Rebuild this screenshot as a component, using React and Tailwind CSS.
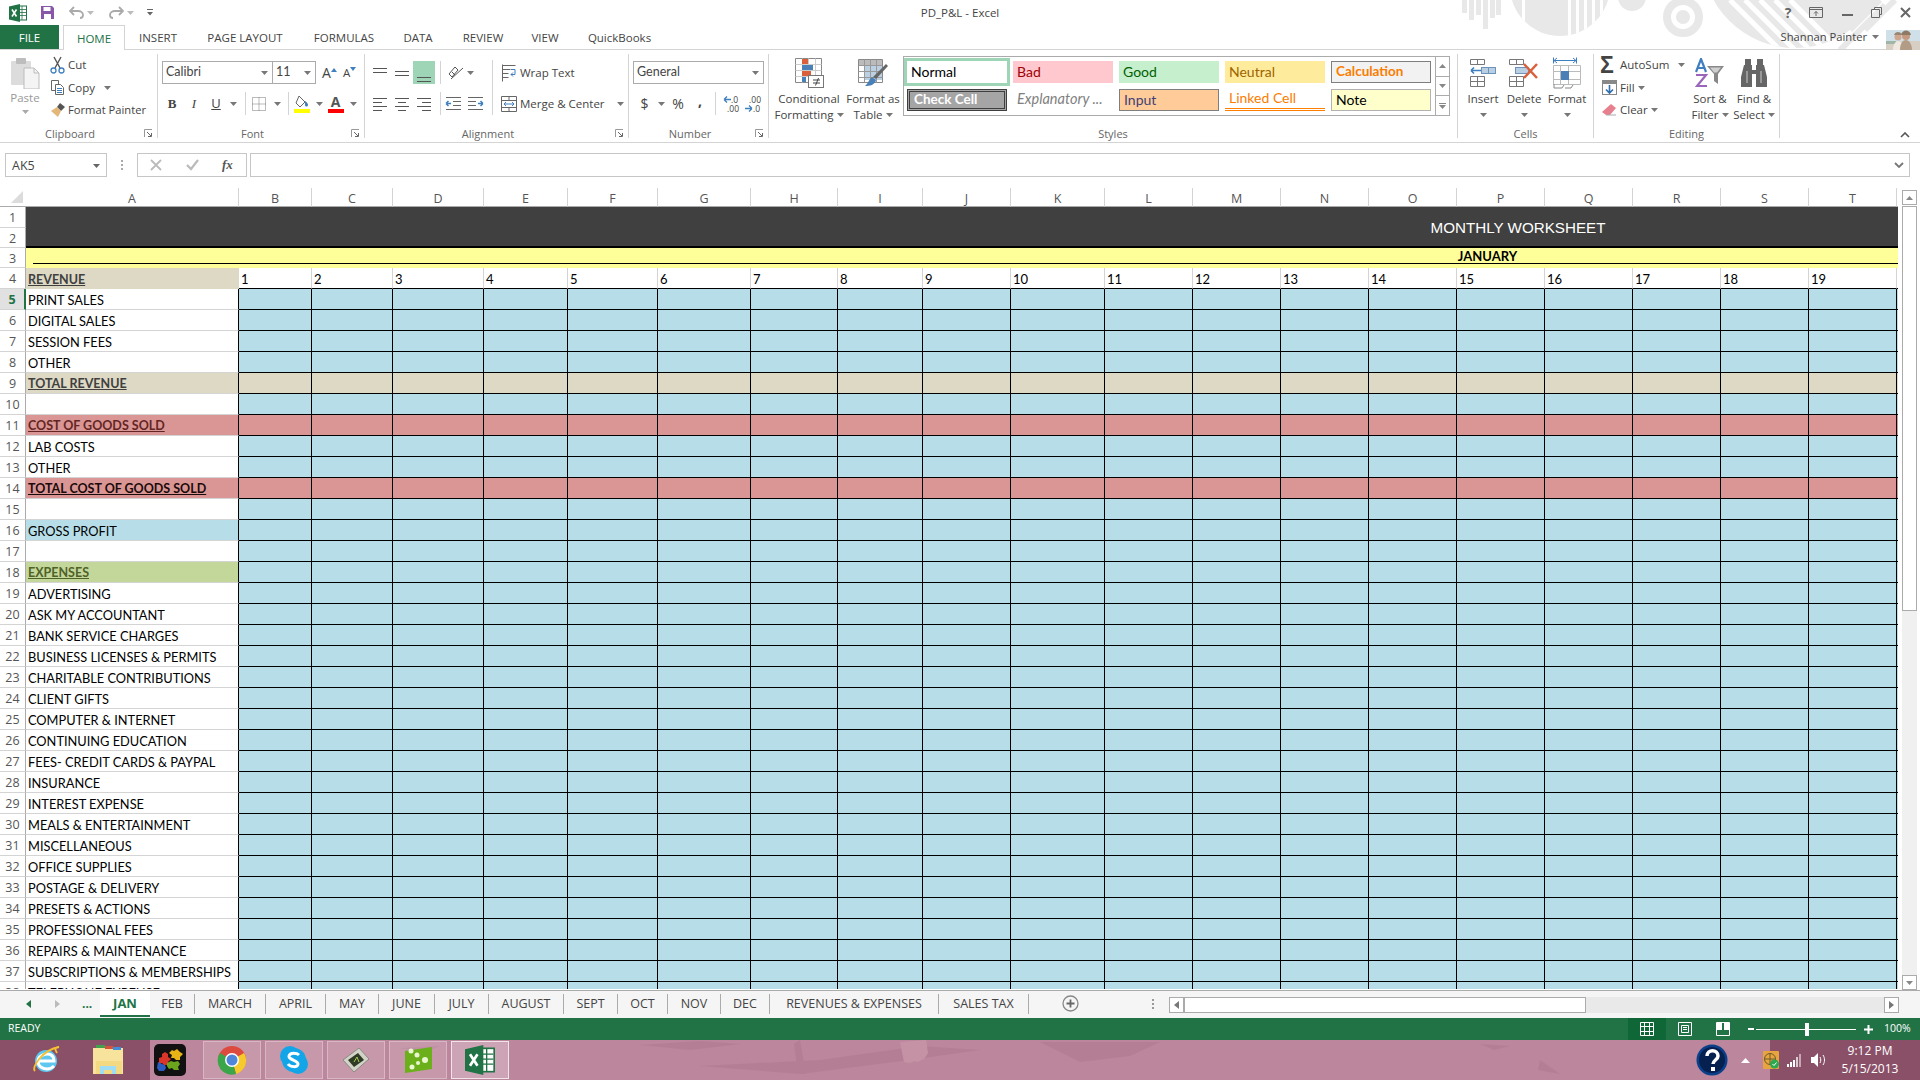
import React from "react";

const Caret = ({ c = "#777" }) => (
  <svg width="7" height="4" viewBox="0 0 7 4" className="shrink-0"><path d="M0 0h7L3.500 4z" fill={c} /></svg>
);

const Launcher = () => (
  <svg width="9" height="9" viewBox="0 0 9 9" className="absolute right-[4px] bottom-[0px]">
    <path d="M.5 8V.5H8" fill="none" stroke="#999" />
    <path d="M3 3l4 4M7.500 4v3.500H4" fill="none" stroke="#666" />
  </svg>
);

const Group = ({ w, label, launcher, children }) => (
  <div className={`relative mt-[4px] flex h-[84px] shrink-0 flex-col border-r border-[#d4d4d4] ${w}`}>
    <div className="flex min-h-0 flex-1">{children}</div>
    <div className={`-mb-[3px] h-[14px] text-center text-[11px] leading-[14px] text-[#666] ${launcher ? "pr-[17px]" : ""}`}>{label}</div>
    {launcher && <Launcher />}
  </div>
);

const BigBtn = ({ w, icon, l1, l2 }) => (
  <div className={`flex shrink-0 flex-col items-center pt-[4px] ${w}`}>
    <div className="flex h-[30px] items-center justify-center">{icon}</div>
    <div className="mt-[3px] whitespace-nowrap text-center leading-[16px]">{l1}</div>
    <div className="flex h-[16px] items-center justify-center gap-[3px] whitespace-nowrap leading-[16px]">{l2}<Caret /></div>
  </div>
);

const Lines = ({ ys, xs }) => (
  <svg width="16" height="16" viewBox="0 0 16 16">
    {ys.map((y, i) => <path key={i} d={`M${xs[i][0]} ${y}.5H${xs[i][1]}`} stroke="#555" />)}
  </svg>
);

const Paste = () => (
  <svg width="30" height="32" viewBox="0 0 30 32">
    <rect x="1" y="4" width="20" height="24" rx="1" fill="#dcdcdc" />
    <rect x="6" y="1" width="10" height="6" rx="1" fill="#bdbdbd" />
    <path d="M14 11h10l5 5v16H14z" fill="#f4f4f4" stroke="#bdbdbd" />
    <path d="M24 11v5h5" fill="none" stroke="#bdbdbd" />
  </svg>
);
const Scissors = () => (
  <svg width="15" height="18" viewBox="0 0 15 18" fill="none">
    <path d="M11 1L5 12M4 1l6 11" stroke="#555" strokeWidth="1.400" />
    <circle cx="3.500" cy="14.500" r="2.500" stroke="#3f7fbf" strokeWidth="1.300" />
    <circle cx="11.500" cy="14.500" r="2.500" stroke="#3f7fbf" strokeWidth="1.300" />
  </svg>
);
const CopyI = () => (
  <svg width="15" height="15" viewBox="0 0 15 15" fill="none" stroke="#666">
    <path d="M1.500.5h7v10h-7z" fill="#fff" />
    <path d="M5.500 4.500h5l3 3v7h-8z" fill="#fff" />
    <path d="M7 8.500h5M7 10.500h5M7 12.500h5" stroke="#3f7fbf" />
  </svg>
);
const Brush = () => (
  <svg width="16" height="16" viewBox="0 0 16 16">
    <path d="M10 1l5 4-4 4-4-4z" fill="#555" />
    <path d="M7 5l4 4-3 6-7-6z" fill="#e3b778" />
  </svg>
);
const BorderI = () => (
  <svg width="14" height="14" viewBox="0 0 14 14" fill="none" stroke="#777" strokeDasharray="1 1">
    <path d="M.5.5h13v13H.5zM7 .5v13M.5 7h13" />
  </svg>
);
const FillI = () => (
  <svg width="17" height="18" viewBox="0 0 17 18">
    <path d="M5 1l6 6-5 5-4-4z" fill="#fff" stroke="#666" />
    <path d="M11 6c2 1 3 3 3 4a1.500 1.500 0 01-3 0z" fill="#3f7fbf" />
    <rect y="14" width="16" height="4" fill="#ffff00" />
  </svg>
);
const FontColor = () => (
  <div className="flex w-[16px] flex-col items-center">
    <span className="text-[14px] font-bold leading-[13px] text-[#555]">A</span>
    <span className="mt-[1px] h-[4px] w-[16px] bg-[#ff0000]" />
  </div>
);
const Orient = () => (
  <svg width="18" height="18" viewBox="0 0 18 18" fill="none" stroke="#555">
    <path d="M2 10l6-7 3 3-6 7z" />
    <path d="M4 15l12-11M5 8l3 3" />
  </svg>
);
const Wrap = () => (
  <svg width="16" height="18" viewBox="0 0 16 18" fill="none">
    <path d="M1.500 1.500h13M1.500 5.500h8M1.500 9.500h6M1.500 13.500h6M1.500 .5v17" stroke="#666" />
    <path d="M10 5.500h4v5h-4M12 8.500l-2 2 2 2" stroke="#3f7fbf" />
  </svg>
);
const Merge = () => (
  <svg width="16" height="18" viewBox="0 0 16 18" fill="none">
    <path d="M.5 1.500h15v15H.5zM.5 5.500h15M.5 12.500h15M8 1.500v4M8 12.500v4" stroke="#666" />
    <path d="M3 9h10M3 9l2-2M3 9l2 2M13 9l-2-2M13 9l-2 2" stroke="#3f7fbf" />
  </svg>
);
const Indent = ({ flip }) => (
  <svg width="16" height="14" viewBox="0 0 16 14" fill="none" className={flip ? "-scale-x-100" : ""}>
    <path d="M1 .5h15M8 4.500h8M8 8.500h8M1 12.500h15" stroke="#666" />
    <path d="M6 6.500H1M1 6.500l2.500-2.500M1 6.500L3.500 9" stroke="#3f7fbf" strokeWidth="1.500" />
  </svg>
);
const CondFmt = () => (
  <svg width="31" height="30" viewBox="0 0 31 30">
    <path d="M1.500 .5h26v24h-26z" fill="#fff" stroke="#888" />
    <path d="M8.500 .5v24M14.500 .5v24M21.500 .5v24M1.500 6.500h26M1.500 12.500h26M1.500 18.500h26" stroke="#ccc" />
    <rect x="8" y="1" width="6" height="5" fill="#d9603b" />
    <rect x="8" y="7" width="11" height="5" fill="#4a80b8" />
    <rect x="8" y="13" width="9" height="5" fill="#d9603b" />
    <rect x="8" y="19" width="4" height="5" fill="#4a80b8" />
    <rect x="14.500" y="17.500" width="15" height="12" fill="#fff" stroke="#777" />
    <path d="M19 22h7M19 25h7M24.500 20l-3 7.500" stroke="#444" fill="none" />
  </svg>
);
const FmtTable = () => (
  <svg width="30" height="30" viewBox="0 0 30 30">
    <path d="M.5 1.500h24v23H.5z" fill="#fff" stroke="#888" />
    <rect x="1" y="2" width="23" height="5" fill="#bbb" />
    <rect x="6" y="7" width="18" height="15" fill="#bcd0e4" />
    <path d="M6.500 1.500v23M12.500 1.500v23M18.500 1.500v23M.5 7.500h24M.5 13.500h24M.5 19.500h24" stroke="#999" />
    <path d="M28 6l2 2-12 13-3-2z" fill="#666" />
    <path d="M14 19l4 3c-1 5-6 6-11 6 3-2 4-7 7-9z" fill="#4a80b8" />
  </svg>
);
const InsertI = () => (
  <svg width="28" height="30" viewBox="0 0 28 30" fill="none">
    <path d="M1.500 1.500h14v5h-14zM8.500 1.500v5M1.500 18.500h14v10h-14zM8.500 18.500v10M1.500 23.500h14" stroke="#777" />
    <path d="M12 12.500H2M2 12.500l3-3M2 12.500l3 3" stroke="#3f7fbf" strokeWidth="1.600" />
    <rect x="12.500" y="9.500" width="14" height="6" fill="#b9cfe4" stroke="#6f93b8" />
    <path d="M19.500 9.500v6" stroke="#6f93b8" />
  </svg>
);
const DeleteI = () => (
  <svg width="30" height="30" viewBox="0 0 30 30" fill="none">
    <path d="M.5 1.500h14v5H.5zM7.500 1.500v5M.5 18.500h14v10H.5zM7.500 18.500v10M.5 23.500h14" stroke="#777" />
    <rect x="6.500" y="9.500" width="13" height="6" fill="#b9cfe4" stroke="#6f93b8" />
    <path d="M15 6l13 14M28 6L15 20" stroke="#d9603b" strokeWidth="2.500" />
  </svg>
);
const FormatI = () => (
  <svg width="29" height="32" viewBox="0 0 29 32" fill="none">
    <path d="M1 3.500h22M1 3.500l3-2.500M1 3.500L4 6M23 3.500L20 1M23 3.500L20 6" stroke="#3f7fbf" />
    <path d="M.5 .5v6M23.500 .5v6" stroke="#3f7fbf" />
    <path d="M.5 8.500h27v19H.5zM7.500 8.500v19M15.500 8.500v19M.5 14.500h27M.5 22.500h27" stroke="#bbb" fill="#fff" />
    <rect x="8" y="14" width="8" height="9" fill="#4a80b8" />
    <path d="M1 27v4h8l2-3M12 31h6l2-3" stroke="#888" />
  </svg>
);
const FillDown = () => (
  <svg width="15" height="15" viewBox="0 0 15 15">
    <rect x=".5" y=".5" width="14" height="14" fill="#fff" stroke="#888" />
    <rect x="1" y="1" width="13" height="3" fill="#888" />
    <path d="M7.500 5v8M4 9.500l3.500 3.500L11 9.500" fill="none" stroke="#2f6fb0" strokeWidth="1.600" />
  </svg>
);
const Eraser = () => (
  <svg width="14" height="12" viewBox="0 0 14 12">
    <path d="M9 0l5 4-6 7H4L0 8z" fill="#e7808e" />
    <path d="M4 11h10" stroke="#aaa" />
  </svg>
);
const SortI = () => (
  <svg width="30" height="30" viewBox="0 0 30 30">
    <path d="M1 14L6 1l5 13M3 10h6" fill="none" stroke="#3f7fbf" strokeWidth="2.200" />
    <path d="M1 17h10L2 28h10" fill="none" stroke="#9966bb" strokeWidth="2.200" />
    <path d="M12 8h17l-6 8v10l-4-3v-7z" fill="#888" />
    <path d="M15 9.500h11l-4 5h-3z" fill="#cfcfcf" />
  </svg>
);
const Binoc = () => (
  <svg width="26" height="28" viewBox="0 0 26 28" fill="#666">
    <rect x="4" y="0" width="6" height="7" />
    <rect x="16" y="0" width="6" height="7" />
    <path d="M3 6h8v5h4V6h8l3 12v10H15V15h-4v13H0V18z" />
    <path d="M5 12h2v12H5zM19 12h2v12h-2z" fill="#999" />
  </svg>
);

const StyleCell = ({ c, children }) => (
  <div className={`flex h-[22px] w-[100px] items-center overflow-hidden whitespace-nowrap pb-[2px] pl-[4px] font-['Lato',sans-serif] ${c}`}>{children}</div>
);

const ScrollBtn = ({ dir }) => (
  <svg width="7" height="4" viewBox="0 0 7 4">
    <path d={dir === "up" ? "M3.500 0L7 4H0z" : "M0 0h7L3.500 4z"} fill="#888" />
  </svg>
);

const Arrow = ({ flip }) => (
  <svg width="8" height="7" viewBox="0 0 8 7" fill="none" className={flip ? "-scale-x-100" : ""}>
    <path d="M8 3.500H1M1 3.500l3-3M1 3.500l3 3" stroke="#3f7fbf" strokeWidth="1.300" />
  </svg>
);

const Ribbon = () => (
  <div className="flex h-[93px] border-b border-[#d4d4d4] bg-white text-[11.5px] text-[#444]">
    <Group w="w-[158px]" label="Clipboard" launcher>
      <div className="flex w-[50px] shrink-0 flex-col items-center pt-[3px] text-[#999]">
        <Paste />
        <span className="mt-[2px] leading-[14px]">Paste</span>
        <div className="mt-[5px]"><Caret c="#aaa" /></div>
      </div>
      <div className="flex flex-col">
        <div className="flex h-[22px] items-center gap-[3px]"><Scissors /><span>Cut</span></div>
        <div className="flex h-[23px] items-center gap-[3px]"><CopyI /><span>Copy</span><span className="ml-[6px]"><Caret /></span></div>
        <div className="flex h-[22px] items-center gap-[2px]"><Brush /><span className="whitespace-nowrap text-[11.2px]">Format Painter</span></div>
      </div>
    </Group>

    <Group w="w-[207px]" label="Font" launcher>
      <div className="flex flex-col pt-[7px]">
        <div className="ml-[4px] flex h-[23px] items-center">
          <div className="flex h-full w-[111px] items-center justify-between border border-[#ababab] pl-[3px] pr-[4px] font-['Lato',sans-serif] text-[12.5px]"><span>Calibri</span><Caret /></div>
          <div className="-ml-px flex h-full w-[44px] items-center justify-between border border-[#ababab] pl-[3px] pr-[4px] font-['Lato',sans-serif] text-[12.5px]"><span>11</span><Caret /></div>
          <div className="ml-[6px] flex w-[16px] items-end text-[14px] leading-none">A<svg width="6" height="4" className="mb-[8px]" viewBox="0 0 6 4"><path d="M3 0l3 4H0z" fill="#3f7fbf" /></svg></div>
          <div className="ml-[5px] flex w-[16px] items-end text-[11.5px] leading-none">A<svg width="6" height="4" className="mb-[7px]" viewBox="0 0 6 4"><path d="M0 0h6L3 4z" fill="#3f7fbf" /></svg></div>
        </div>
        <div className="mt-[8px] flex h-[23px] items-center pl-[3px]">
          <span className="w-[22px] text-center font-['Liberation_Serif',serif] text-[13px] font-bold">B</span>
          <span className="w-[22px] text-center font-['Liberation_Serif',serif] text-[13px] italic">I</span>
          <span className="w-[22px] text-center text-[13px] underline">U</span>
          <span className="flex w-[12px] justify-center"><Caret /></span>
          <span className="ml-[6px] h-[23px] w-px bg-[#d4d4d4]" />
          <span className="flex w-[26px] justify-center"><BorderI /></span>
          <span className="flex w-[10px] justify-center"><Caret /></span>
          <span className="ml-[6px] h-[23px] w-px bg-[#d4d4d4]" />
          <span className="flex w-[27px] justify-center"><FillI /></span>
          <span className="flex w-[6px] justify-center"><Caret /></span>
          <span className="flex w-[27px] justify-center"><FontColor /></span>
          <span className="flex w-[8px] justify-center"><Caret /></span>
        </div>
      </div>
    </Group>

    <Group w="w-[264px]" label="Alignment" launcher>
      <div className="flex flex-col pt-[7px] pl-[4px]">
        <div className="flex h-[23px] items-center">
          <span className="flex w-[22px] justify-center"><Lines ys={[3, 7]} xs={[[1, 15], [1, 15]]} /></span>
          <span className="flex w-[22px] justify-center"><Lines ys={[6, 10]} xs={[[1, 15], [1, 15]]} /></span>
          <span className="flex h-[23px] w-[22px] items-end justify-center bg-[#9fd5b7]"><Lines ys={[9, 13]} xs={[[1, 15], [1, 15]]} /></span>
          <span className="ml-[5px] h-[23px] w-px bg-[#d4d4d4]" />
          <span className="ml-[6px] flex w-[18px] justify-center"><Orient /></span>
          <span className="ml-[2px]"><Caret /></span>
        </div>
        <div className="mt-[8px] flex h-[23px] items-center">
          <span className="flex w-[22px] justify-center"><Lines ys={[2, 6, 10, 14]} xs={[[1, 15], [1, 10], [1, 15], [1, 10]]} /></span>
          <span className="flex w-[22px] justify-center"><Lines ys={[2, 6, 10, 14]} xs={[[1, 15], [4, 12], [1, 15], [4, 12]]} /></span>
          <span className="flex w-[22px] justify-center"><Lines ys={[2, 6, 10, 14]} xs={[[1, 15], [6, 15], [1, 15], [6, 15]]} /></span>
          <span className="ml-[5px] h-[23px] w-px bg-[#d4d4d4]" />
          <span className="flex w-[24px] justify-center"><Indent /></span>
          <span className="flex w-[22px] justify-center"><Indent flip /></span>
        </div>
      </div>
      <div className="ml-[5px] mt-[6px] h-[55px] w-px bg-[#d4d4d4]" />
      <div className="flex flex-col pl-[8px] pt-[7px]">
        <div className="flex h-[23px] items-center gap-[3px]"><Wrap /><span className="whitespace-nowrap">Wrap Text</span></div>
        <div className="mt-[8px] flex h-[23px] items-center gap-[3px]"><Merge /><span className="whitespace-nowrap">Merge &amp; Center</span><span className="ml-[9px]"><Caret /></span></div>
      </div>
    </Group>

    <Group w="w-[140px]" label="Number" launcher>
      <div className="flex flex-col pl-[4px] pt-[7px]">
        <div className="flex h-[23px] w-[131px] items-center justify-between border border-[#ababab] pl-[3px] pr-[4px] font-['Lato',sans-serif] text-[12.5px]"><span>General</span><Caret /></div>
        <div className="mt-[8px] flex h-[23px] items-center">
          <span className="w-[23px] text-center text-[14px]">$</span>
          <span className="flex w-[10px] justify-center"><Caret /></span>
          <span className="w-[24px] text-center text-[14px]">%</span>
          <span className="-mt-[6px] ml-[3px] w-[14px] text-center text-[14px] font-bold">,</span>
          <span className="ml-[8px] h-[23px] w-px bg-[#d4d4d4]" />
          <div className="ml-[7px] flex w-[16px] flex-col text-[8.5px] leading-[9px]">
            <span className="flex items-center"><Arrow /><span>.0</span></span>
            <span className="text-right">.00</span>
          </div>
          <div className="ml-[6px] flex w-[16px] flex-col text-[8.5px] leading-[9px]">
            <span className="text-right">.00</span>
            <span className="flex items-center"><Arrow flip /><span>.0</span></span>
          </div>
        </div>
      </div>
    </Group>

    <Group w="w-[689px]" label="Styles">
      <BigBtn w="ml-[2px] w-[76px]" icon={<CondFmt />} l1="Conditional" l2="Formatting" />
      <BigBtn w="w-[52px]" icon={<FmtTable />} l1="Format as" l2="Table" />
      <div className="ml-[4px] mt-[2px] flex h-[60px] w-[547px] shrink-0 border border-[#ababab]">
        <div className="grid flex-1 grid-cols-[100px_100px_100px_100px_100px] content-start gap-x-[6px] gap-y-[6px] pl-[3px] pt-[4px]">
          <StyleCell c="bg-white text-[14px] text-black outline outline-[3px] outline-[#9fd5b7]">Normal</StyleCell>
          <StyleCell c="bg-[#ffc7ce] text-[14px] text-[#9c0006]">Bad</StyleCell>
          <StyleCell c="bg-[#c6efce] text-[14px] text-[#006100]">Good</StyleCell>
          <StyleCell c="bg-[#ffeb9c] text-[14px] text-[#9c6500]">Neutral</StyleCell>
          <StyleCell c="border border-[#7f7f7f] bg-[#f2f2f2] text-[13.5px] font-bold text-[#fa7d00]">Calculation</StyleCell>
          <StyleCell c="border-[3px] border-double border-[#3f3f3f] bg-[#a5a5a5] text-[13.5px] font-bold text-white">Check Cell</StyleCell>
          <StyleCell c="text-[14.5px] italic text-[#7f7f7f]">Explanatory ...</StyleCell>
          <StyleCell c="border border-[#7f7f7f] bg-[#ffcc99] text-[14px] text-[#3f3f76]">Input</StyleCell>
          <StyleCell c="border-b-[3px] border-double border-[#ff8001] text-[14px] text-[#fa7d00]">Linked Cell</StyleCell>
          <StyleCell c="border border-[#b2b2b2] bg-[#ffffcc] text-[14px] text-black">Note</StyleCell>
        </div>
        <div className="flex w-[14px] flex-col border-l border-[#ababab]">
          <div className="flex flex-1 items-center justify-center border-b border-[#ababab]"><ScrollBtn dir="up" /></div>
          <div className="flex flex-1 items-center justify-center border-b border-[#ababab]"><ScrollBtn /></div>
          <div className="flex flex-1 flex-col items-center justify-center gap-[1px]"><span className="h-px w-[7px] bg-[#888]" /><ScrollBtn /></div>
        </div>
      </div>
    </Group>

    <Group w="w-[136px]" label="Cells">
      <BigBtn w="ml-[5px] w-[40px]" icon={<InsertI />} l1="Insert" />
      <BigBtn w="ml-[1px] w-[40px]" icon={<DeleteI />} l1="Delete" />
      <BigBtn w="ml-[1px] w-[44px]" icon={<FormatI />} l1="Format" />
    </Group>

    <Group w="w-[186px]" label="Editing">
      <div className="flex w-[94px] shrink-0 flex-col pl-[6px]">
        <div className="flex h-[22px] items-center"><span className="w-[20px] font-['Liberation_Sans',sans-serif] text-[23px] font-bold leading-none text-[#444]">Σ</span><span>AutoSum</span><span className="ml-[9px]"><Caret /></span></div>
        <div className="flex h-[23px] items-center"><span className="ml-[2px] w-[18px]"><FillDown /></span><span>Fill</span><span className="ml-[3px]"><Caret /></span></div>
        <div className="flex h-[22px] items-center"><span className="ml-[2px] w-[18px]"><Eraser /></span><span>Clear</span><span className="ml-[3px]"><Caret /></span></div>
      </div>
      <BigBtn w="w-[44px]" icon={<SortI />} l1="Sort &" l2="Filter" />
      <BigBtn w="w-[44px]" icon={<Binoc />} l1="Find &" l2="Select" />
    </Group>

    <div className="flex flex-1 items-end justify-end pb-[4px] pr-[10px]">
      <svg width="10" height="6" viewBox="0 0 10 6"><path d="M1 5l4-4 4 4" fill="none" stroke="#555" strokeWidth="1.600" /></svg>
    </div>
  </div>
);

const Decor = () => (
  <svg width="480" height="50" viewBox="0 0 480 50" className="pointer-events-none absolute right-0 top-0" fill="#e8e8e8">
    <defs>
      <clipPath id="half"><circle cx="120" cy="-14" r="50" /></clipPath>
      <clipPath id="big"><circle cx="355" cy="-45" r="93" /></clipPath>
    </defs>
    {[[22, 13], [29, 20], [36, 15], [43, 29], [50, 18], [56, 15]].map(([x, h]) => <rect key={x} x={x} width="5" height={h} />)}
    <g clipPath="url(#half)">
      <rect x="70" y="-14" width="100" height="60" />
      {[82, 128, 136, 144, 152, 160].map((x) => <rect key={x} x={x} width="3" height="50" fill="#fff" />)}
    </g>
    <circle cx="192" cy="-3" r="14" />
    <circle cx="243" cy="17" r="16" fill="none" stroke="#e8e8e8" strokeWidth="8" />
    <circle cx="243" cy="17" r="7" />
    <g clipPath="url(#big)">
      <rect x="250" y="-10" width="220" height="70" />
      <path d="M290 0l50 50M305 0l50 50M320 0l48 48M335 0l50 50M350 0l50 50" stroke="#fff" strokeWidth="5" fill="none" />
    </g>
    <path d="M410 30L440 0M425 30L455 0M400 50L445 5" stroke="#e8e8e8" strokeWidth="6" />
  </svg>
);

const ExcelLogo = ({ s = 18 }) => (
  <svg width={s} height={s} viewBox="0 0 18 18">
    <rect x="9" y="2" width="8.500" height="14" fill="#fff" stroke="#217346" />
    <path d="M9 5.500h8M9 8.500h8M9 11.500h8M13 2v14" stroke="#217346" strokeWidth=".8" />
    <path d="M0 2.500L11 0v18L0 15.500z" fill="#217346" />
    <path d="M3 5.500l4.500 7M7.500 5.500l-4.500 7" stroke="#fff" strokeWidth="1.600" />
  </svg>
);

const TitleBar = () => (
  <div className="grid h-[25px] grid-cols-[1fr_auto_1fr] items-center">
    <div className="flex items-center pl-[9px]">
      <ExcelLogo />
      <svg width="15" height="15" viewBox="0 0 15 15" className="ml-[13px]">
        <path d="M1 1h11l2 2v11H1z" fill="#8857a8" />
        <rect x="3.500" y="2" width="7" height="4" fill="#fff" />
        <rect x="4" y="9" width="7" height="5" fill="#fff" />
      </svg>
      <svg width="15" height="13" viewBox="0 0 15 13" className="ml-[14px]" fill="none">
        <path d="M5 1L1 5l4 4" stroke="#aaa" strokeWidth="1.800" />
        <path d="M1 5h8c3 0 5 2 5 4s-1 3-3 3" stroke="#aaa" strokeWidth="1.800" />
      </svg>
      <span className="ml-[3px]"><Caret c="#bbb" /></span>
      <svg width="15" height="13" viewBox="0 0 15 13" className="ml-[15px]" fill="none">
        <path d="M10 1l4 4-4 4" stroke="#aaa" strokeWidth="1.800" />
        <path d="M14 5H6c-3 0-5 2-5 4s1 3 3 3" stroke="#aaa" strokeWidth="1.800" />
      </svg>
      <span className="ml-[3px]"><Caret c="#bbb" /></span>
      <svg width="7" height="7" viewBox="0 0 7 7" className="ml-[13px]"><path d="M0 0h6v1H0zM0 3h6L3 6.500z" fill="#666" /></svg>
    </div>
    <div className="text-[11.5px] text-[#444]">PD_P&amp;L - Excel</div>
    <div className="relative flex items-center justify-end pr-[9px] text-[#666]">
      <span className="w-[14px] text-center text-[14px] font-bold leading-none">?</span>
      <svg width="14" height="11" viewBox="0 0 14 11" className="ml-[14px]" fill="none" stroke="#666"><path d="M.5.5h13v10H.5zM.5 2.500h13M7 9V4.500M5 6.500l2-2 2 2" /></svg>
      <svg width="11" height="2" viewBox="0 0 11 2" className="ml-[19px] mt-[4px]"><rect width="11" height="2" fill="#666" /></svg>
      <svg width="11" height="11" viewBox="0 0 11 11" className="ml-[18px]" fill="none" stroke="#666"><path d="M3.500 2.500v-2h7v7h-2M.5 2.500h8v8h-8z" /></svg>
      <svg width="11" height="11" viewBox="0 0 11 11" className="ml-[18px]"><path d="M1 1l9 9M10 1l-9 9" stroke="#666" strokeWidth="2" /></svg>
    </div>
  </div>
);

const Avatar = () => (
  <svg width="34" height="20" viewBox="0 0 34 20" className="absolute right-0 top-[5px]">
    <rect width="34" height="11" fill="#cfe0e8" />
    <rect y="11" width="34" height="9" fill="#d8cfc4" />
    <path d="M0 11h10v3H0z" fill="#9fb6a8" />
    <circle cx="12" cy="7" r="3.500" fill="#d0a78e" />
    <path d="M8 5c1-4 7-4 8 0z" fill="#9a8672" />
    <circle cx="20" cy="6" r="4" fill="#c79a80" />
    <path d="M15 5c1-6 9-6 10 0z" fill="#8f7a66" />
    <path d="M7 20c0-6 3-9 5-9s6 3 6 9z" fill="#efe9e2" />
    <path d="M14 20c0-7 3-10 6-10s6 4 6 10z" fill="#b39c86" />
  </svg>
);

const tabs = [
  ["INSERT", "w-[66px]"], ["PAGE LAYOUT", "w-[108px]"], ["FORMULAS", "w-[90px]"], ["DATA", "w-[58px]"],
  ["REVIEW", "w-[72px]"], ["VIEW", "w-[52px]"], ["QuickBooks", "w-[97px]"],
];

const TabsRow = () => (
  <div className="relative flex h-[25px] items-stretch border-b border-[#d4d4d4] text-[11.5px] text-[#444]">
    <div className="flex w-[59px] items-center justify-center bg-[#217346] pt-px text-white">FILE</div>
    <div className="z-10 ml-[4px] flex h-[25px] w-[62px] items-center justify-center border border-b-0 border-[#d4d4d4] bg-white pt-px text-[#217346]">HOME</div>
    {tabs.map(([t, w]) => <div key={t} className={`flex items-center justify-center pt-px ${w}`}>{t}</div>)}
    <div className="ml-auto flex items-center pr-[41px]">
      <span className="text-[11.2px]">Shannan Painter</span>
      <span className="ml-[5px]"><Caret /></span>
    </div>
    <Avatar />
  </div>
);

const FormulaBar = () => (
  <div className="mt-[10px] flex h-[25px] pl-[5px] pr-[10px]">
    <div className="flex w-[102px] items-center justify-between border border-[#c6c6c6] pl-[6px] pr-[6px] pt-[2px] text-[12.5px] text-[#444]">
      <span>AK5</span><Caret c="#666" />
    </div>
    <div className="flex w-[30px] items-center justify-center"><span className="flex flex-col gap-[2px]"><i className="block h-[2px] w-[2px] bg-[#aaa]" /><i className="block h-[2px] w-[2px] bg-[#aaa]" /><i className="block h-[2px] w-[2px] bg-[#aaa]" /></span></div>
    <div className="flex w-[110px] items-center border border-[#c6c6c6]">
      <svg width="12" height="12" viewBox="0 0 12 12" className="ml-[12px]"><path d="M1 1l10 10M11 1L1 11" stroke="#bbb" strokeWidth="1.800" /></svg>
      <svg width="13" height="12" viewBox="0 0 13 12" className="ml-[24px]"><path d="M1 6l4 4 7-9" fill="none" stroke="#bbb" strokeWidth="2.200" /></svg>
      <span className="ml-[23px] font-['Liberation_Serif',serif] text-[13px] font-bold italic text-[#555]">fx</span>
    </div>
    <div className="ml-[3px] flex flex-1 items-center justify-end border border-[#c6c6c6] pr-[5px]">
      <svg width="10" height="6" viewBox="0 0 10 6"><path d="M1 1l4 4 4-4" fill="none" stroke="#777" strokeWidth="1.800" /></svg>
    </div>
  </div>
);

const letters = "ABCDEFGHIJKLMNOPQRST".split("");
const labels = {
  5: "PRINT SALES", 6: "DIGITAL SALES", 7: "SESSION FEES", 8: "OTHER", 9: "TOTAL REVENUE", 10: "", 11: "COST OF GOODS SOLD",
  12: "LAB COSTS", 13: "OTHER", 14: "TOTAL COST OF GOODS SOLD", 15: "", 16: "GROSS PROFIT", 17: "", 18: "EXPENSES",
  19: "ADVERTISING", 20: "ASK MY ACCOUNTANT", 21: "BANK SERVICE CHARGES", 22: "BUSINESS LICENSES & PERMITS",
  23: "CHARITABLE CONTRIBUTIONS", 24: "CLIENT GIFTS", 25: "COMPUTER & INTERNET", 26: "CONTINUING EDUCATION",
  27: "FEES- CREDIT CARDS & PAYPAL", 28: "INSURANCE", 29: "INTEREST EXPENSE", 30: "MEALS & ENTERTAINMENT",
  31: "MISCELLANEOUS", 32: "OFFICE SUPPLIES", 33: "POSTAGE & DELIVERY", 34: "PRESETS & ACTIONS", 35: "PROFESSIONAL FEES",
  36: "REPAIRS & MAINTENANCE", 37: "SUBSCRIPTIONS & MEMBERSHIPS", 38: "TELEPHONE EXPENSE",
};
const labelStyle = {
  9: "bg-[#ddd9c4] text-[12.5px] font-bold underline text-[#404040]",
  11: "bg-[#da9694] text-[12.5px] font-bold underline text-[#632523]",
  14: "bg-[#da9694] text-[12.5px] font-bold underline text-[#1a0a0a]",
  16: "bg-[#b7dee8] text-[12.8px] text-black border-b-[#b7dee8]",
  18: "bg-[#c4d79b] text-[12.5px] font-bold underline text-[#4f6228]",
};
const rowFill = { 9: "bg-[#ddd9c4]", 11: "bg-[#da9694]", 14: "bg-[#da9694]" };
const rowNums = Object.keys(labels).map(Number);

const RowHead = ({ n, sel, className = "" }) => (
  <div className={`flex items-center justify-center border-b border-[#d4d4d4] pt-[2px] font-['Open_Sans',sans-serif] text-[12.5px] ${sel ? "border-r-2 border-r-[#217346] bg-[#e1e1e1] font-bold text-[#217346]" : "border-r border-r-[#ababab] text-[#555]"} ${className}`}>{n}</div>
);

const Sheet = () => (
  <div className="grid h-[801px] w-[1898px] shrink-0 grid-cols-[26px_213px_73px_81px_91px_84px_90px_93px_87px_85px_88px_94px_88px_88px_88px_88px_88px_88px_88px_88px_88px_1px] grid-rows-[19px_21px_20px_20px_21px] auto-rows-[21px] overflow-hidden font-['Lato',sans-serif] text-black">
    <div className="flex items-end justify-end border-b border-[#ababab] pb-[3px] pr-[3px]">
      <svg width="12" height="12" viewBox="0 0 12 12"><path d="M12 0v12H0z" fill="#dcdcdc" /></svg>
    </div>
    {letters.map((l) => (
      <div key={l} className="flex items-center justify-center border-b border-r border-[#ababab] border-r-[#d4d4d4] pt-[3px] font-['Open_Sans',sans-serif] text-[12.5px] text-[#555]">{l}</div>
    ))}
    <div className="border-b border-[#ababab]" />

    <RowHead n="1" className="col-start-1 row-start-2" />
    <div className="col-[2/-1] row-span-2 row-start-2 flex items-center justify-center border-b-2 border-black bg-[#404040] pl-[1112px] pt-[2px] font-['Liberation_Sans',sans-serif] text-[15.2px] text-white">MONTHLY WORKSHEET</div>
    <RowHead n="2" className="col-start-1 row-start-3" />
    <RowHead n="3" className="col-start-1 row-start-4" />
    <div className="col-[2/-1] row-start-4 bg-[#ffff99]">
      <div className="ml-[7px] h-[16px] border-b border-black pl-[1044px] text-center text-[13px] font-bold leading-[17px]">JANUARY</div>
    </div>

    <RowHead n="4" />
    <div className="flex items-center bg-[#ddd9c4] pl-[2px] pt-[2px] text-[12.5px] font-bold text-[#404040] underline">REVENUE</div>
    {letters.slice(1).map((l, i) => (
      <div key={l} className="flex items-center border-b border-r border-b-black border-r-[#d4d4d4] pl-[2px] pt-[2px] text-[13px]">{i + 1}</div>
    ))}
    <div className="border-b border-black" />

    {rowNums.map((r) => (
      <React.Fragment key={r}>
        <RowHead n={r} sel={r === 5} />
        <div className={`flex items-center overflow-hidden whitespace-nowrap border-b border-r border-b-[#d4d4d4] border-r-black pl-[2px] pt-[2px] ${labelStyle[r] || "text-[12.8px]"}`}>{labels[r]}</div>
        {letters.slice(1).map((l) => (
          <div key={l} className={`border-b border-r border-black ${rowFill[r] || "bg-[#b7dee8]"}`} />
        ))}
        <div className={`border-b border-black ${rowFill[r] || "bg-[#b7dee8]"}`} />
      </React.Fragment>
    ))}
  </div>
);

const VScroll = () => (
  <div className="ml-[4px] mt-[2px] flex h-[800px] w-[15px] flex-col">
    <div className="flex h-[15px] items-center justify-center border border-[#ababab]"><ScrollBtn dir="up" /></div>
    <div className="mt-[1px] h-[405px] border border-[#ababab] bg-white" />
    <div className="flex-1 bg-[#f0f0f0]" />
    <div className="flex h-[15px] items-center justify-center border border-[#ababab]"><ScrollBtn /></div>
  </div>
);

const sheets = [
  ["FEB", "w-[45px]"], ["MARCH", "w-[71px]"], ["APRIL", "w-[60px]"], ["MAY", "w-[53px]"], ["JUNE", "w-[56px]"],
  ["JULY", "w-[54px]"], ["AUGUST", "w-[75px]"], ["SEPT", "w-[54px]"], ["OCT", "w-[50px]"], ["NOV", "w-[53px]"],
  ["DEC", "w-[49px]"], ["REVENUES & EXPENSES", "w-[169px]"], ["SALES TAX", "w-[90px]"],
];

const TabStrip = () => (
  <div className="flex h-[28px] border-t border-[#ababab] bg-[#f5f5f5] text-[12.5px] text-[#444]">
    <div className="flex h-[25px] w-[100px] shrink-0 items-center">
      <svg width="5" height="8" viewBox="0 0 5 8" className="ml-[26px]"><path d="M5 0v8L0 4z" fill="#217346" /></svg>
      <svg width="5" height="8" viewBox="0 0 5 8" className="ml-[24px]"><path d="M0 0v8l5-4z" fill="#bbb" /></svg>
      <span className="ml-[22px] text-[12px] font-bold leading-none text-[#217346]">...</span>
    </div>
    <div className="flex h-[26px] w-[50px] shrink-0 items-center justify-center border-b-2 border-[#217346] bg-white text-[13px] font-bold text-[#217346]">JAN</div>
    {sheets.map(([t, w]) => (
      <div key={t} className="flex h-[25px] items-center">
        <div className={`flex h-[20px] items-center justify-center whitespace-nowrap border-r border-[#ababab] ${w}`}>{t}</div>
      </div>
    ))}
    <div className="ml-[33px] flex h-[25px] shrink-0 items-center">
      <svg width="17" height="17" viewBox="0 0 17 17" fill="none"><circle cx="8.500" cy="8.500" r="7.500" stroke="#888" strokeWidth="1.300" /><path d="M8.500 4.500v8M4.500 8.500h8" stroke="#666" strokeWidth="1.800" /></svg>
    </div>
    <div className="ml-[73px] flex h-[25px] shrink-0 items-center">
      <span className="flex flex-col gap-[2px]"><i className="block h-[2px] w-[2px] bg-[#999]" /><i className="block h-[2px] w-[2px] bg-[#999]" /><i className="block h-[2px] w-[2px] bg-[#999]" /></span>
    </div>
    <div className="ml-[15px] mt-[6px] flex h-[16px] w-[730px] shrink-0">
      <div className="flex w-[15px] items-center justify-center border border-[#ababab] bg-white"><svg width="5" height="8" viewBox="0 0 5 8"><path d="M5 0v8L0 4z" fill="#777" /></svg></div>
      <div className="w-[402px] border border-[#ababab] bg-white" />
      <div className="flex-1 bg-[#e9e9e9]" />
      <div className="flex w-[15px] items-center justify-center border border-[#ababab] bg-white"><svg width="5" height="8" viewBox="0 0 5 8"><path d="M0 0v8l5-4z" fill="#777" /></svg></div>
    </div>
  </div>
);

const StatusBar = () => (
  <div className="flex h-[22px] items-stretch bg-[#217346] text-[10.5px] text-white">
    <div className="flex items-center pl-[8px]">READY</div>
    <div className="ml-auto flex items-stretch">
      <div className="flex w-[38px] items-center justify-center bg-[#0f6637]">
        <svg width="14" height="14" viewBox="0 0 14 14" fill="none" stroke="#fff"><path d="M.5.5h13v13H.5zM4.500.5v13M9.500.5v13M.5 4.500h13M.5 9.500h13" /></svg>
      </div>
      <div className="flex w-[38px] items-center justify-center">
        <svg width="14" height="14" viewBox="0 0 14 14" fill="none" stroke="#fff"><path d="M.5.5h13v13H.5zM3.500 3.500h7v7h-7zM5 5.500h4M5 7.500h4" /></svg>
      </div>
      <div className="flex w-[38px] items-center justify-center">
        <svg width="14" height="14" viewBox="0 0 14 14"><path d="M.5.5h13v13H.5z" fill="none" stroke="#fff" /><path d="M1 1h5v7H1zM8 1h5v7H8z" fill="#fff" /></svg>
      </div>
      <div className="ml-[6px] flex items-center">
        <span className="h-[2px] w-[6px] bg-white" />
        <div className="relative ml-[2px] h-px w-[100px] bg-white">
          <span className="absolute left-[49px] top-[-6px] h-[13px] w-[4px] bg-white" />
        </div>
        <svg width="9" height="9" viewBox="0 0 9 9" className="ml-[8px]"><path d="M4.500 0v9M0 4.500h9" stroke="#fff" strokeWidth="2" /></svg>
        <span className="ml-[11px] mr-[9px] w-[27px] whitespace-nowrap">100%</span>
      </div>
    </div>
  </div>
);

const TaskBtn = ({ active, children }) => (
  <div className={`flex h-[38px] w-[58px] shrink-0 items-center justify-center border ${active ? "border-white/70 bg-white/25" : "border-white/30 bg-white/15"}`}>{children}</div>
);

const Taskbar = () => (
  <div className="relative flex h-[40px] items-center overflow-hidden bg-[#bc869c] font-['Open_Sans',sans-serif] text-white">
    <svg width="1920" height="40" viewBox="0 0 1920 40" className="absolute inset-0" fill="#a8718a" opacity=".35">
      <path d="M640 5l60-4 40 3-50 6zM700 26l120-6 100-14 60 4-70 10-110 14zM1040 2h120l-30 14-50 6z" />
      <path d="M800 0l6 34h-8l-4-30zM400 8l40-2-15 6zM1540 20l20 14-22-4zM1480 4l30 2-16 4z" />
      <path d="M900 2l4 20 6 1 4-2 4 1 6-3 4-6-2-13z" fill="#d8a9b8" />
    </svg>
    <div className="relative z-10 flex h-full w-[150px] shrink-0 items-center bg-[#8a5068]">
      <svg width="32" height="32" viewBox="0 0 32 32" className="ml-[30px]" fill="none">
        <circle cx="16" cy="17" r="11" fill="#5fc6f0" />
        <path d="M8 17h16c0-5-3-7-7-7s-9 3-9 7zm0 0c0 5 4 8 9 8 3 0 5-1 7-3" stroke="#fff" strokeWidth="3" />
        <path d="M5 27C1 24 12 6 29 3c-6 0-3 4-2 6" stroke="#f5c12e" strokeWidth="1.800" />
      </svg>
      <svg width="32" height="30" viewBox="0 0 32 30" className="ml-[30px]">
        <path d="M1 3h30v26H1z" fill="#f7e39b" />
        <rect x="4" y="0" width="9" height="3" fill="#3fa34d" />
        <rect x="13" y="1" width="8" height="3" fill="#d9533b" />
        <rect x="21" y="2" width="8" height="3" fill="#3f8fd9" />
        <path d="M4 16h26v13H4z" fill="#f2d982" />
        <path d="M8 29v-8h16v8h-4v-4h-8v4z" fill="#9fdcf5" />
      </svg>
    </div>
    <div className="relative z-10 ml-[4px] flex h-[32px] w-[32px] shrink-0 items-center justify-center rounded-[5px] bg-[#111]">
      <svg width="28" height="24" viewBox="0 0 28 24">
        <path d="M3 10l3-1V6l3-2 3 2v3l3 2-3 3v3H8l-2-2-3 1z" fill="#d9352b" />
        <path d="M13 5l3-3 2 1 3-2 3 3 3 2-3 3v3h-4l-2-2h-3l1-3z" fill="#e8b317" />
        <path d="M2 14l4 2 3 1 1 3-2 3H3l-2-3z" fill="#2d5cc0" />
        <path d="M11 15l4-2 3 1 4-1 2 3-2 3 1 3h-5l-2-2-3 1-2-3z" fill="#6aa51d" />
      </svg>
    </div>
    <div className="relative z-10 ml-[17px] flex items-center gap-[4px]">
      <TaskBtn>
        <svg width="30" height="30" viewBox="0 0 30 30">
          <circle cx="15" cy="15" r="14" fill="#dd4b3e" />
          <path d="M15 15L27 8a14 14 0 01-8 21z" fill="#f6c92c" />
          <path d="M15 15L19 29A14 14 0 013 8z" fill="#3ba54a" />
          <circle cx="15" cy="15" r="7" fill="#fff" /><circle cx="15" cy="15" r="5.500" fill="#4f86d9" />
        </svg>
      </TaskBtn>
      <TaskBtn>
        <svg width="30" height="30" viewBox="0 0 30 30">
          <circle cx="11" cy="11" r="10" fill="#12a5e8" /><circle cx="19" cy="19" r="10" fill="#12a5e8" /><circle cx="15" cy="15" r="12" fill="#12a5e8" />
          <path d="M20 10c-2-2-9-3-10 1s9 4 9 8-8 3-10 0" fill="none" stroke="#fff" strokeWidth="3" />
        </svg>
      </TaskBtn>
      <TaskBtn>
        <svg width="30" height="30" viewBox="0 0 30 30">
          <path d="M2 15L18 3l10 11-15 13z" fill="#d2d2c8" stroke="#8a8a80" />
          <path d="M7 15L17 8l6 7-10 7z" fill="#2f3a24" />
          <path d="M13 17l3-5 2 5" stroke="#a8cc5a" fill="none" />
        </svg>
      </TaskBtn>
      <TaskBtn>
        <svg width="30" height="28" viewBox="0 0 30 28">
          <path d="M2 5L29 1v22L2 27z" fill="#6bb01a" />
          <circle cx="8" cy="5" r="2.500" fill="#eaf6d0" /><circle cx="14" cy="9" r="2.500" fill="#eaf6d0" /><circle cx="22" cy="14" r="3" fill="#eaf6d0" /><circle cx="9" cy="21" r="2.500" fill="#eaf6d0" /><circle cx="15" cy="17" r="2" fill="#eaf6d0" />
        </svg>
      </TaskBtn>
      <TaskBtn active><ExcelLogo s={30} /></TaskBtn>
    </div>
    <div className="relative z-10 ml-auto flex h-full items-center">
      <svg width="32" height="32" viewBox="0 0 32 32" className="mr-[13px]">
        <circle cx="16" cy="16" r="15.500" fill="#0a3f8a" />
        <circle cx="16" cy="16" r="13" fill="#06204f" />
        <path d="M11 12c0-7 11-7 11 0 0 4-5 4-5 8" fill="none" stroke="#fff" strokeWidth="3.500" />
        <rect x="15" y="23" width="4" height="4" fill="#fff" />
      </svg>
      <svg width="9" height="5" viewBox="0 0 9 5" className="mr-[20px]"><path d="M4.500 0L9 5H0z" fill="#fff" /></svg>
      <div className="flex h-full w-[150px] items-center bg-[#8a5068]">
        <svg width="16" height="18" viewBox="0 0 16 18" className="-ml-[7px]">
          <rect width="16" height="18" rx="1" fill="#e8a53f" />
          <circle cx="7" cy="8" r="5.500" fill="none" stroke="#6b5a2a" />
          <path d="M1.500 8h11M7 2.500v11" stroke="#6b5a2a" />
          <circle cx="11.500" cy="13" r="4.500" fill="#2fa84f" />
          <path d="M9.500 13l1.500 1.500 2.500-3" fill="none" stroke="#fff" />
        </svg>
        <svg width="16" height="14" viewBox="0 0 16 14" className="ml-[8px]" fill="#fff">
          <rect x="0" y="11" width="2" height="3" /><rect x="3" y="9" width="2" height="5" /><rect x="6" y="7" width="2" height="7" />
          <rect x="9" y="4" width="2" height="10" opacity=".7" /><rect x="12" y="1" width="2" height="13" opacity=".5" />
        </svg>
        <svg width="16" height="16" viewBox="0 0 16 16" className="ml-[7px]" fill="none">
          <path d="M1 5h3l4-4v14l-4-4H1z" fill="#fff" />
          <path d="M10 5c1 2 1 4 0 6M13 3c2 3 2 7 0 10" stroke="#fff" />
        </svg>
        <div className="ml-[13px] w-[62px] text-center text-[12px] leading-[18px]">
          <div>9:12 PM</div><div>5/15/2013</div>
        </div>
      </div>
    </div>
  </div>
);

export default function App() {
  return (
    <div className="flex h-[1080px] w-[1920px] flex-col overflow-hidden bg-white font-['Open_Sans',sans-serif]">
      <div className="relative h-[50px] shrink-0">
        <Decor />
        <div className="relative">
          <TitleBar />
          <TabsRow />
        </div>
      </div>
      <Ribbon />
      <FormulaBar />
      <div className="mt-[11px] flex shrink-0">
        <Sheet />
        <VScroll />
      </div>
      <TabStrip />
      <StatusBar />
      <Taskbar />
    </div>
  );
}
